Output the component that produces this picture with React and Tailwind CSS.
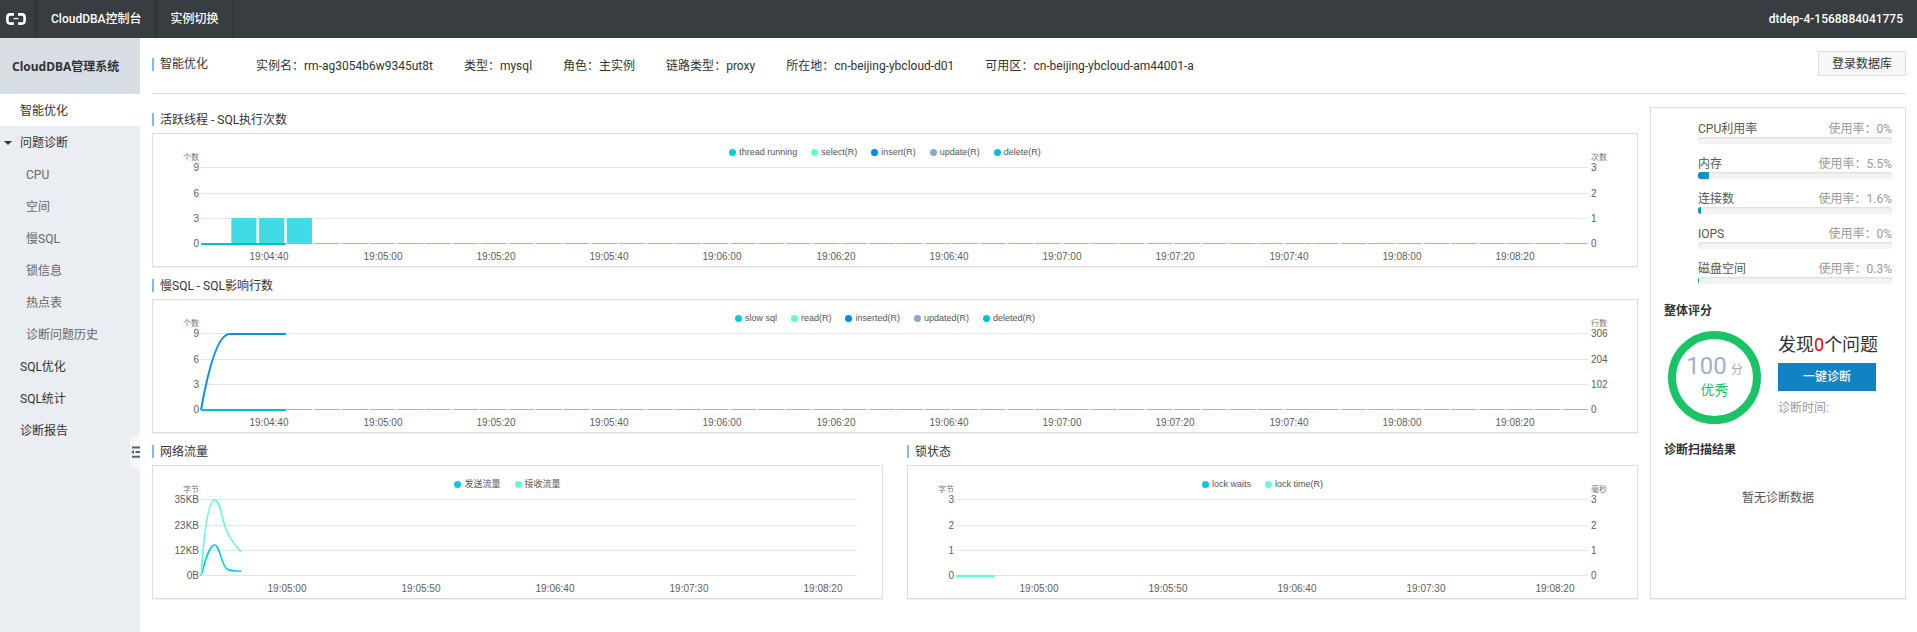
import { useLayoutEffect, useRef, useState } from 'react';

const CYAN = '#00cddc';
const MINT = '#60fdd0';
const BLUE = '#0084ff';
const SLATE = '#87a9cc';
const SKY = '#00bfdd';

const PLOT_LEFT = 48;
const GRID_ROWS = [9, 35, 60, 85];
const PLOT_TOP = 10;
const PLOT_BOTTOM = 86;

const MINUTE_LABELS = [
  '19:04:40', '19:05:00', '19:05:20', '19:05:40', '19:06:00', '19:06:20',
  '19:06:40', '19:07:00', '19:07:20', '19:07:40', '19:08:00', '19:08:20',
];
const TRAFFIC_LABELS = ['19:05:00', '19:05:50', '19:06:40', '19:07:30', '19:08:20'];

function useWidth() {
  const ref = useRef(null);
  const [width, setWidth] = useState(0);
  useLayoutEffect(() => {
    const node = ref.current;
    const update = () => setWidth(node.clientWidth);
    update();
    const observer = new ResizeObserver(update);
    observer.observe(node);
    return () => observer.disconnect();
  }, []);
  return [ref, width];
}

function Bars({ plotWidth, heights }) {
  const slot = plotWidth / 50;
  return Array.from({ length: 49 }, (_, i) => {
    const h = heights[i] || 0;
    const x = PLOT_LEFT + slot * (i + 1) + 2.6;
    return h ? (
      <rect key={i} x={x} y={PLOT_BOTTOM - h} width={slot - 2.6} height={h} fill="#41dbe6" />
    ) : (
      <rect key={i} x={x} y={PLOT_BOTTOM - 1} width={slot - 2.6} height={1} fill="#63d3dd" />
    );
  });
}

function Chart({ legend, leftUnit, rightUnit, left, right, labels, first, step, rightPad, children }) {
  const [ref, width] = useWidth();
  const plotWidth = Math.max(width - PLOT_LEFT - rightPad, 0);
  const plotRight = PLOT_LEFT + plotWidth;
  return (
    <div ref={ref} className="h-[134px] border border-[#dddddd] bg-white shadow-[0_1px_1px_rgba(0,0,0,0.05)]">
      <ul className="flex h-6 items-end justify-center gap-3.5 pr-5 font-['Liberation_Sans','Noto_Sans_CJK_SC',sans-serif] text-[9px] leading-[12px] text-[#555555]">
        {legend.map(([name, color]) => (
          <li key={name} className="flex items-center gap-[3px]">
            <svg width="7" height="7" viewBox="0 0 7 7" aria-hidden="true">
              <circle cx="3.5" cy="3.5" r="3.5" fill={color} />
            </svg>
            {name}
          </li>
        ))}
      </ul>
      {width > 0 && (
        <svg
          width={width}
          height="108"
          className="block overflow-visible font-['Liberation_Sans','Noto_Sans_CJK_SC',sans-serif] text-[10px]"
          fill="#5e5e5e"
        >
          <text x={PLOT_LEFT - 2} y="2" textAnchor="end" className="text-[8px]" fill="#777777">{leftUnit}</text>
          {rightUnit && <text x={plotRight + 3} y="2" className="text-[8px]" fill="#777777">{rightUnit}</text>}
          {GRID_ROWS.map((y, i) => (
            <g key={y}>
              <rect x={PLOT_LEFT} y={y} width={plotWidth} height="1" fill="#e3e4e5" />
              <text x={PLOT_LEFT - 2} y={y + 4} textAnchor="end">{left[i]}</text>
              {right && <text x={plotRight + 3} y={y + 4}>{right[i]}</text>}
            </g>
          ))}
          {labels.map((label, i) => (
            <text key={label} x={Math.round(PLOT_LEFT + plotWidth * (first + step * i))} y="102" textAnchor="middle">
              {label}
            </text>
          ))}
          {children(plotWidth)}
        </svg>
      )}
    </div>
  );
}

function Heading({ children }) {
  return (
    <h2 className="flex h-8 items-center gap-1.5 pt-[5px]">
      <span className="h-[13px] w-0.5 bg-[#88b7e0]" />
      {children}
    </h2>
  );
}

const INFO = [
  ['实例名', 'rm-ag3054b6w9345ut8t'],
  ['类型', 'mysql'],
  ['角色', '主实例'],
  ['链路类型', 'proxy'],
  ['所在地', 'cn-beijing-ybcloud-d01'],
  ['可用区', 'cn-beijing-ybcloud-am44001-a'],
];

const USAGE = [
  ['CPU利用率', 0],
  ['内存', 5.5],
  ['连接数', 1.6],
  ['IOPS', 0],
  ['磁盘空间', 0.3],
];

const DIAGNOSIS = ['CPU', '空间', '慢SQL', '锁信息', '热点表', '诊断问题历史'];

function TopBar() {
  return (
    <header className="flex h-[38px] items-stretch bg-[#373d41] font-medium text-white">
      <a href="#" aria-label="首页" className="flex w-[37px] items-center border-r border-[#2a2f32] pl-1.5">
        <svg width="20" height="12" viewBox="0 0 20 12" fill="none" stroke="#ffffff" strokeWidth="2.6" aria-hidden="true">
          <path d="M8 1.4H4.2Q1.4 1.4 1.4 4.2V7.8Q1.4 10.6 4.2 10.6H8" />
          <path d="M12 1.4H15.8Q18.6 1.4 18.6 4.2V7.8Q18.6 10.6 15.8 10.6H12" />
          <path d="M7.5 5.6H12.5" strokeWidth="1.3" />
        </svg>
      </a>
      <a href="#" className="flex items-center border-r border-[#2a2f32] px-3.5">CloudDBA控制台</a>
      <a href="#" className="flex items-center border-r border-[#2a2f32] px-3.5">实例切换</a>
      <span className="ml-auto flex items-center pr-3.5">dtdep-4-1568884041775</span>
    </header>
  );
}

function Sidebar() {
  const top = 'flex h-8 items-center pt-0.5 pl-5 text-[#333333]';
  return (
    <aside className="relative w-[140px] shrink-0 bg-[#eaedf2]">
      <div className="flex h-14 items-center bg-[#d9dee4] pt-0.5 pl-3 font-['Noto_Sans','Noto_Sans_CJK_SC',sans-serif] font-bold text-[#333333]">
        CloudDBA管理系统
      </div>
      <nav>
        <a href="#" className={top + ' bg-white'}>智能优化</a>
        <a href="#" className="flex h-8 items-center gap-2 pt-0.5 pl-1 text-[#333333]">
          <svg width="8" height="4" viewBox="0 0 8 4" fill="#333333" aria-hidden="true">
            <path d="M0 0H8L4 4Z" />
          </svg>
          问题诊断
        </a>
        {DIAGNOSIS.map((name) => (
          <a key={name} href="#" className="flex h-8 items-center pt-0.5 pl-[26px] text-[#666666]">{name}</a>
        ))}
        <a href="#" className={top}>SQL优化</a>
        <a href="#" className={top}>SQL统计</a>
        <a href="#" className={top}>诊断报告</a>
      </nav>
      <button type="button" aria-label="收起菜单" className="absolute top-[394px] right-0">
        <svg width="10" height="40" viewBox="0 0 10 40" className="block" aria-hidden="true">
          <path d="M10 0V40L0 33V7Z" fill="#f7f7f7" />
          <path d="M2 15.5H10M5.5 20H10M2 24.8H10" stroke="#546478" strokeWidth="2" />
          <path d="M1 20L4 18V22Z" fill="#546478" />
        </svg>
      </button>
    </aside>
  );
}

function StatusPanel() {
  return (
    <section className="w-64 shrink-0 self-stretch border border-[#dddddd] bg-white shadow-[0_1px_1px_rgba(0,0,0,0.05)]">
      <ul className="px-[13px] pt-[13px] pl-[47px]">
        {USAGE.map(([name, value]) => (
          <li key={name} className="h-[35px]">
            <div className="flex justify-between leading-4 text-[#555555]">
              <span>{name}</span>
              <span className="text-[#999999]">使用率：{value}%</span>
            </div>
            <div
              role="meter"
              aria-label={name}
              aria-valuenow={value}
              className="h-[7px] overflow-hidden rounded-[3px] bg-[#f3f3f3] shadow-[inset_0_1px_2px_rgba(0,0,0,0.1)]"
            >
              <div
                className="h-full bg-linear-to-r from-[#0f86c6] to-[#17a0c4]"
                style={{ width: `${value}%` }}
              />
            </div>
          </li>
        ))}
      </ul>
      <h3 className="px-[13px] pt-[5px] leading-5 font-bold text-[#333333]">整体评分</h3>
      <div className="flex items-start gap-[17px] pt-2.5 pl-[17px]">
        <div className="flex h-[93px] w-[93px] flex-col items-center justify-center rounded-full border-8 border-[#1ac466] pb-1">
          <div className="flex items-baseline gap-1 text-[#a2afc7]">
            <span className="text-2xl leading-7">100</span>
            <span>分</span>
          </div>
          <span className="text-sm leading-5 text-[#1ac466]">优秀</span>
        </div>
        <div className="pt-0.5">
          <p className="text-lg leading-6 text-[#333333]">
            发现<span className="text-[#ff0000]">0</span>个问题
          </p>
          <button type="button" className="mt-1.5 block h-7 w-[98px] bg-[#1183c5] font-medium text-white">一键诊断</button>
          <p className="mt-2 leading-[18px] text-[#999999]">诊断时间:</p>
        </div>
      </div>
      <h3 className="px-[13px] pt-4 leading-5 font-bold text-[#333333]">诊断扫描结果</h3>
      <p className="pt-7 text-center leading-5 text-[#555555]">暂无诊断数据</p>
    </section>
  );
}

export default function App() {
  return (
    <div className="flex min-h-screen flex-col bg-white font-['Roboto','Noto_Sans_CJK_SC',sans-serif] text-xs text-[#333333]">
      <TopBar />
      <div className="flex flex-1">
        <Sidebar />
        <main className="min-w-0 flex-1 pr-[11px] pl-3">
          <div className="flex h-14 items-start border-b border-[#dddddd]">
            <h1 className="flex h-13 items-center gap-1.5">
              <span className="h-[13px] w-0.5 bg-[#88b7e0]" />
              智能优化
            </h1>
            <dl className="flex h-14 items-center gap-[31px] pl-12">
              {INFO.map(([name, value]) => (
                <div key={name} className="flex">
                  <dt>{name}：</dt>
                  <dd>{value}</dd>
                </div>
              ))}
            </dl>
            <button type="button" className="mt-[13px] ml-auto h-[25px] border border-[#dddddd] bg-[#f7f7f7] px-[13px]">
              登录数据库
            </button>
          </div>
          <div className="flex gap-3 pt-[13px]">
            <div className="-mt-1.5 min-w-0 flex-1">
              <Heading>活跃线程 - SQL执行次数</Heading>
              <Chart
                legend={[['thread running', CYAN], ['select(R)', MINT], ['insert(R)', BLUE], ['update(R)', SLATE], ['delete(R)', SKY]]}
                leftUnit="个数" rightUnit="次数"
                left={[9, 6, 3, 0]} right={[3, 2, 1, 0]}
                labels={MINUTE_LABELS} first={0.0492} step={0.08167} rightPad={49}
              >
                {(w) => (
                  <>
                    <Bars plotWidth={w} heights={[26, 26, 26]} />
                    <rect x={PLOT_LEFT} y={PLOT_BOTTOM - 1} width={w * 0.0612} height="2" fill={SKY} />
                  </>
                )}
              </Chart>
              <Heading>慢SQL - SQL影响行数</Heading>
              <Chart
                legend={[['slow sql', CYAN], ['read(R)', MINT], ['inserted(R)', BLUE], ['updated(R)', SLATE], ['deleted(R)', SKY]]}
                leftUnit="个数" rightUnit="行数"
                left={[9, 6, 3, 0]} right={[306, 204, 102, 0]}
                labels={MINUTE_LABELS} first={0.0492} step={0.08167} rightPad={49}
              >
                {(w) => {
                  const s = w / 50;
                  const x = (n) => PLOT_LEFT + s * n;
                  return (
                    <>
                      <Bars plotWidth={w} heights={[]} />
                      <path
                        d={`M${x(0)} ${PLOT_BOTTOM}C${x(0.18)} 58 ${x(0.54)} ${PLOT_TOP} ${x(1.03)} ${PLOT_TOP}H${x(3.06)}`}
                        fill="none" stroke="#0591f2" strokeWidth="2"
                      />
                      <rect x={PLOT_LEFT} y={PLOT_BOTTOM - 1} width={w * 0.0612} height="2" fill={SKY} />
                    </>
                  );
                }}
              </Chart>
              <div className="grid grid-cols-2 gap-6">
                <div>
                  <Heading>网络流量</Heading>
                  <Chart
                    legend={[['发送流量', CYAN], ['接收流量', MINT]]}
                    leftUnit="字节"
                    left={['35KB', '23KB', '12KB', '0B']}
                    labels={TRAFFIC_LABELS} first={0.131} step={0.2043} rightPad={25}
                  >
                    {(w) => {
                      const s = w / 49;
                      const x = (n) => PLOT_LEFT + s * n;
                      return (
                        <g fill="none" strokeWidth="1.6">
                          <path
                            d={`M${x(0)} 86C${x(0.25)} 74 ${x(0.6)} 55 ${x(1)} 55C${x(1.45)} 55 ${x(1.5)} 77 ${x(2)} 79.5Q${x(2.2)} 80.8 ${x(3)} 81.3`}
                            stroke={CYAN}
                          />
                          <path
                            d={`M${x(0)} 86C${x(0.15)} 58 ${x(0.45)} 10 ${x(1)} 10C${x(1.5)} 10 ${x(1.55)} 32 ${x(1.95)} 42Q${x(2.3)} 52 ${x(3)} 62`}
                            stroke={MINT}
                          />
                        </g>
                      );
                    }}
                  </Chart>
                </div>
                <div>
                  <Heading>锁状态</Heading>
                  <Chart
                    legend={[['lock waits', CYAN], ['lock time(R)', MINT]]}
                    leftUnit="字节" rightUnit="毫秒"
                    left={[3, 2, 1, 0]} right={[3, 2, 1, 0]}
                    labels={TRAFFIC_LABELS} first={0.131} step={0.2043} rightPad={49}
                  >
                    {(w) => <rect x={PLOT_LEFT} y={PLOT_BOTTOM - 1} width={w * 0.0615} height="2" fill={MINT} />}
                  </Chart>
                </div>
              </div>
            </div>
            <StatusPanel />
          </div>
        </main>
      </div>
    </div>
  );
}
